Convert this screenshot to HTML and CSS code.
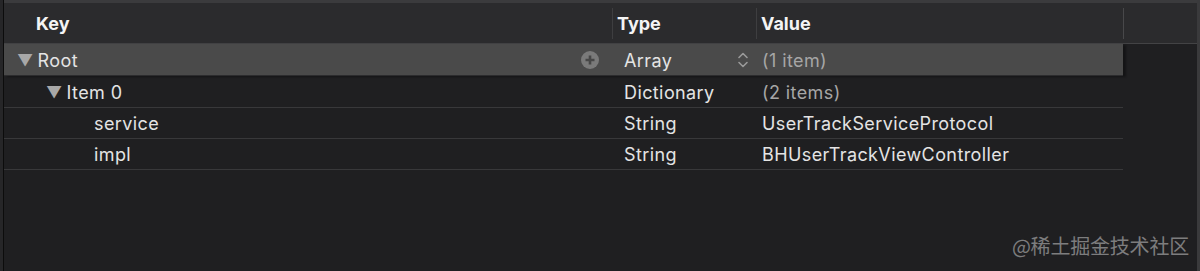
FILE: index.html
```html
<!DOCTYPE html>
<html lang="en">
<head>
  <meta charset="UTF-8" />
  <title>Property List</title>
  <link rel="stylesheet" href="styles.css">
</head>
<body>
  <div class="frame">
    <div class="topstrip"></div>
    <div class="header">
      <div class="hcell key">Key</div>
      <div class="hcell type">Type</div>
      <div class="hcell value">Value</div>
      <div class="hcell rest"></div>
    </div>
    <div class="table">
      <div class="row selected">
        <div class="cell key lvl0"><span class="tri">&#9660;</span>Root<span class="plus"><svg width="18" height="18" viewBox="0 0 18 18"><circle cx="9" cy="9" r="9" fill="#7a7a7a"/><path d="M9 4.5v9M4.5 9h9" stroke="#474747" stroke-width="2.6"/></svg></span></div>
        <div class="cell type">Array<span class="stepper"><svg width="12" height="20" viewBox="0 0 12 20"><path d="M2 7.5l4-4 4 4M2 12.5l4 4 4-4" fill="none" stroke="#9a9a9a" stroke-width="1.6" stroke-linecap="round" stroke-linejoin="round"/></svg></span></div>
        <div class="cell value dim">(1 item)</div>
      </div>
      <div class="row">
        <div class="cell key lvl1"><span class="tri">&#9660;</span>Item 0</div>
        <div class="cell type">Dictionary</div>
        <div class="cell value dim">(2 items)</div>
      </div>
      <div class="row">
        <div class="cell key lvl2">service</div>
        <div class="cell type">String</div>
        <div class="cell value">UserTrackServiceProtocol</div>
      </div>
      <div class="row">
        <div class="cell key lvl2">impl</div>
        <div class="cell type">String</div>
        <div class="cell value">BHUserTrackViewController</div>
      </div>
    </div>
    <div class="watermark">@稀土掘金技术社区</div>
  </div>
</body>
</html>
```

FILE: styles.css
```css
* { box-sizing: border-box; }
html, body { margin: 0; height: 100%; }
body { background: #1f1f21; font-family: Inter, "Liberation Sans", sans-serif; color: #e4e4e4; overflow: hidden; }
.frame { position: relative; height: 271px; border-left: 4px solid #262628; border-right: 3px solid #3a3a3c; }
.frame::before { content: ""; position: absolute; left: -1px; top: 0; bottom: 0; width: 1px; background: #0c0c0c; }
.topstrip { height: 3px; background: #3b3b3d; }
.header { display: grid; grid-template-columns: 608px 144px 367px 1fr; height: 41px; background: #2b2b2d; border-bottom: 1px solid #434345; }
.hcell { font-weight: 700; font-size: 18px; color: #f4f4f4; display: flex; align-items: center; padding-left: 4px; border-left: 1px solid #3e3e40; margin: 5px 0 4px; }
.hcell.key { padding-left: 32px; border-left: none; }
.hcell.rest { border-left: 1px solid #48484a; }
.table { width: 1119px; }
.row { display: grid; grid-template-columns: 608px 144px 1fr; height: 31px; border-bottom: 1px solid #38383a; }
.row:first-child + .row { height: 32px; }
.row.selected { height: 32px; background: #4a4a4a; border-bottom: 1px solid #2c2c2e; box-shadow: 3px 1px 2px rgba(0,0,0,0.35); }
.cell { display: flex; align-items: center; font-size: 18px; letter-spacing: 0.4px; padding-top: 1px; }
.cell.key { position: relative; }
.lvl0 { padding-left: 13px; }
.lvl1 { padding-left: 42px; }
.lvl2 { padding-left: 90px; }
.tri { font-size: 16px; color: #a8a8a8; margin-right: 4px; }
.plus { position: absolute; right: 13px; top: 7px; line-height: 0; }
.cell.type { padding-left: 12px; position: relative; }
.stepper { position: absolute; right: 7px; top: 6px; line-height: 0; }
.cell.value { padding-left: 6px; }
.dim { color: #a6a6a6; }
.watermark { position: absolute; right: 8px; bottom: 11px; font-size: 20px; color: rgba(220,220,220,0.5); font-family: "Noto Sans CJK SC", sans-serif; letter-spacing: -0.2px; }
```
